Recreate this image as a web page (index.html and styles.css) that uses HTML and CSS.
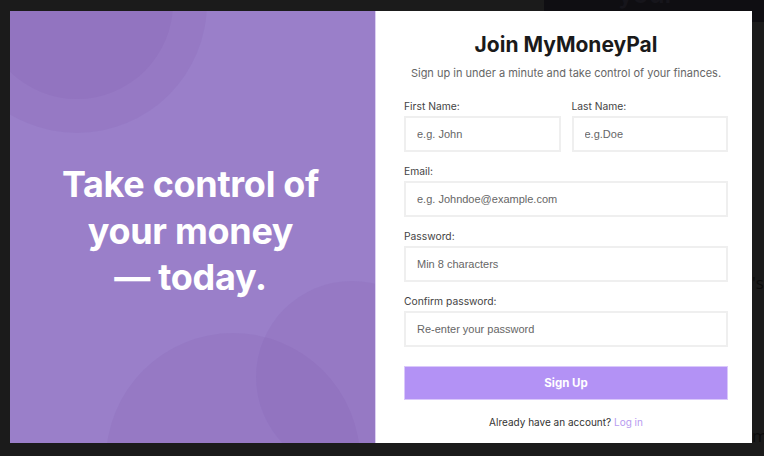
FILE: index.html
```html
<!DOCTYPE html>
<html lang="en">
<head>
<meta charset="utf-8">
<title>Join MyMoneyPal</title>
<link rel="stylesheet" href="styles.css">
</head>
<body>
<div class="backdrop">
  <div class="bg-strip"><span>your money</span></div>
  <span class="bg-letter bg-s">'s</span>
  <span class="bg-letter bg-m">m</span>
</div>
<div class="modal">
  <aside class="hero">
    <span class="circle c1"></span>
    <span class="circle c1-inner"></span>
    <span class="circle c2"></span>
    <span class="circle c3"></span>
    <h2 class="hero-text">Take control of<br>your money<br>— today.</h2>
  </aside>
  <section class="panel">
    <h1 class="title">Join MyMoneyPal</h1>
    <p class="subtitle">Sign up in under a minute and take control of your finances.</p>
    <form class="form">
      <div class="row">
        <div class="field">
          <label class="label">First Name:</label>
          <input class="input" type="text" placeholder="e.g. John">
        </div>
        <div class="field">
          <label class="label">Last Name:</label>
          <input class="input" type="text" placeholder="e.g.Doe">
        </div>
      </div>
      <div class="field">
        <label class="label">Email:</label>
        <input class="input" type="email" placeholder="e.g. Johndoe@example.com">
      </div>
      <div class="field">
        <label class="label">Password:</label>
        <input class="input" type="password" placeholder="Min 8 characters">
      </div>
      <div class="field">
        <label class="label">Confirm password:</label>
        <input class="input" type="password" placeholder="Re-enter your password">
      </div>
      <button class="btn" type="button">Sign Up</button>
    </form>
    <p class="footer">Already have an account? <a class="link" href="#">Log in</a></p>
  </section>
</div>
</body>
</html>
```

FILE: styles.css
```css
* { box-sizing: border-box; }
html, body { margin: 0; padding: 0; }
body {
  background: #1b1b1b;
  width: 764px;
  height: 456px;
  overflow: hidden;
  position: relative;
  font-family: Inter, "Liberation Sans", sans-serif;
}
.backdrop { position: absolute; inset: 0; }
.bg-strip {
  position: absolute;
  left: 544px;
  top: 0;
  width: 220px;
  height: 22px;
  background: #0f0e12;
  overflow: hidden;
}
.bg-strip span {
  position: absolute;
  left: 74px;
  top: -22px;
  font-size: 26px;
  color: #16151b;
  font-weight: 600;
}
.bg-letter {
  position: absolute;
  font-family: "Open Sans", sans-serif;
  font-size: 17px;
  color: #0c0c0c;
}
.bg-s { left: 752px; top: 271px; }
.bg-m { left: 752px; top: 424px; }

.modal {
  position: relative;
  margin: 11px 0 0 10px;
  width: 742px;
  height: 432px;
  display: flex;
  background: #fff;
}
.hero {
  position: relative;
  width: 365px;
  flex: none;
  background: #9a7fc9;
  overflow: hidden;
  display: flex;
  align-items: center;
  justify-content: center;
}
.circle {
  position: absolute;
  border-radius: 50%;
  background: rgba(110, 70, 160, 0.09);
}
.c1 { left: -63px; top: -138px; width: 260px; height: 260px; }
.c1-inner { left: -29px; top: -104px; width: 192px; height: 192px; }
.c2 { left: 246px; top: 270px; width: 192px; height: 192px; }
.c3 { left: 96px; top: 322px; width: 254px; height: 254px; }
.hero-text {
  position: relative;
  margin: 8px 4px 0 0;
  color: #fff;
  font-size: 36px;
  line-height: 46.5px;
  font-weight: 700;
  text-align: center;
  letter-spacing: -0.3px;
}
.panel {
  flex: 1;
  min-width: 0;
  border-left: 1px solid #dcd0f2;
  padding: 22px 24px 0 28px;
  display: flex;
  flex-direction: column;
}
.title {
  margin: 0;
  text-align: center;
  font-size: 21px;
  line-height: 24px;
  font-weight: 700;
  color: #1a1a1a;
}
.subtitle {
  margin: 9px 0 0 0;
  text-align: center;
  font-size: 11px;
  line-height: 14px;
  color: #666;
}
.form {
  margin-top: 20px;
  display: flex;
  flex-direction: column;
  gap: 13px;
}
.row {
  display: flex;
  gap: 11px;
}
.row .field { flex: 1; min-width: 0; }
.field {
  display: flex;
  flex-direction: column;
  min-width: 0;
}
.label {
  font-size: 10.3px;
  line-height: 12px;
  color: #444;
  margin-bottom: 4px;
}
.input {
  width: 100%;
  min-width: 0;
  height: 36px;
  border: 2px solid #efefef;
  border-radius: 0;
  padding: 0 11px;
  font-family: "Liberation Sans", Arial, sans-serif;
  font-size: 11px;
  color: #333;
  background: #fff;
  outline: none;
}
.input::placeholder { color: #666; }
.btn {
  margin-top: 6px;
  height: 34px;
  border: 1px solid #dac8fb;
  background: #b392f5;
  color: #fff;
  font-family: Inter, "Liberation Sans", sans-serif;
  font-weight: 700;
  font-size: 11.5px;
}
.footer {
  margin: 16px 0 0 0;
  text-align: center;
  font-size: 10px;
  line-height: 12px;
  color: #333;
}
.link {
  color: #b79bf0;
  text-decoration: none;
}
```
